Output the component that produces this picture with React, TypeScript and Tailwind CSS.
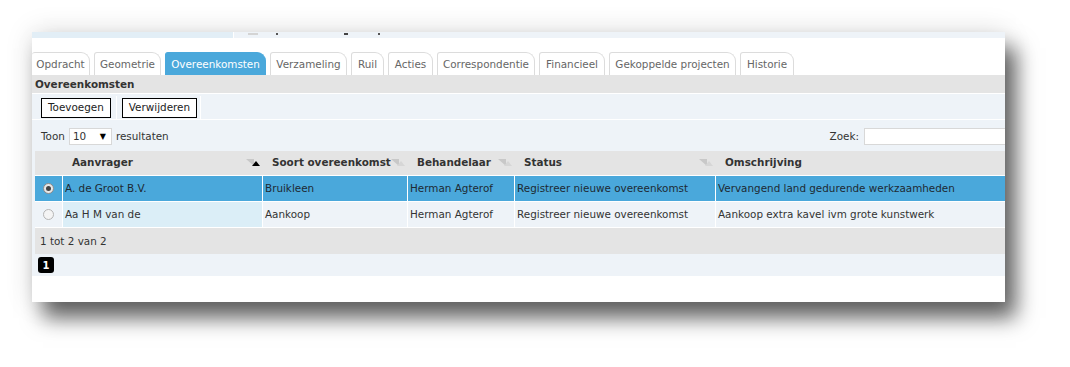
import React from 'react'

const tabs = [
  { label: 'Opdracht', w: 'w-[58px]' },
  { label: 'Geometrie', w: 'w-[67px]' },
  { label: 'Overeenkomsten', w: 'w-[101px]', active: true },
  { label: 'Verzameling', w: 'w-[77px]' },
  { label: 'Ruil', w: 'w-[33px]' },
  { label: 'Acties', w: 'w-[45px]' },
  { label: 'Correspondentie', w: 'w-[98px]' },
  { label: 'Financieel', w: 'w-[66px]' },
  { label: 'Gekoppelde projecten', w: 'w-[127px]' },
  { label: 'Historie', w: 'w-[54px]' },
]

interface Row {
  aanvrager: string
  soort: string
  behandelaar: string
  status: string
  omschrijving: string
  selected?: boolean
}

const rows: Row[] = [
  {
    aanvrager: 'A. de Groot B.V.',
    soort: 'Bruikleen',
    behandelaar: 'Herman Agterof',
    status: 'Registreer nieuwe overeenkomst',
    omschrijving: 'Vervangend land gedurende werkzaamheden',
    selected: true,
  },
  {
    aanvrager: 'Aa H M van de',
    soort: 'Aankoop',
    behandelaar: 'Herman Agterof',
    status: 'Registreer nieuwe overeenkomst',
    omschrijving: 'Aankoop extra kavel ivm grote kunstwerk',
  },
]

function SortIcon({ asc }: { asc?: boolean }) {
  return (
    <svg width="14" height="9" viewBox="0 0 14 9" className="shrink-0">
      <polygon points="0,1 8,1 8,8" fill="#c8c8c8" />
      <polygon points="6,8 10,3 14,8" fill={asc ? '#000' : '#d6d6d6'} />
    </svg>
  )
}

function Radio({ checked }: { checked?: boolean }) {
  return (
    <span
      className={`flex h-[11px] w-[11px] items-center justify-center rounded-full border ${
        checked ? 'border-[#8a8a8a] bg-[#e8e8e8]' : 'border-[#b5b5b5] bg-[#f4f4f4]'
      }`}
    >
      {checked && <span className="h-[5px] w-[5px] rounded-full bg-[#444]" />}
    </span>
  )
}

const cols = [
  { key: 'aanvrager', label: 'Aanvrager', w: 'w-[200px]', asc: true },
  { key: 'soort', label: 'Soort overeenkomst', w: 'w-[145px]' },
  { key: 'behandelaar', label: 'Behandelaar', w: 'w-[107px]' },
  { key: 'status', label: 'Status', w: 'w-[201px]' },
  { key: 'omschrijving', label: 'Omschrijving', w: 'flex-1', nosort: true },
] as const

export default function App() {
  return (
    <div
      className="h-[367px] w-[1070px] overflow-hidden bg-white pl-[32px] pt-[32px] text-[10.4px] text-[#333]"
      style={{ fontFamily: '"DejaVu Sans", Verdana, sans-serif' }}
    >
      <div className="flex h-[270px] w-[973px] flex-col bg-white shadow-[0_0_26px_rgba(0,0,0,0.13),11px_16px_20px_rgba(0,0,0,0.6)]">
        {/* cut-off strip from the previous section */}
        <div className="flex h-[6px] bg-[#eef3f8]">
          <div className="w-[201px] bg-[#e2eef6]" />
          <div className="w-px bg-white" />
          <div className="flex flex-1 items-start">
            <span className="ml-[14px] mt-[1px] h-[2px] w-[10px] bg-[#d4d4d4]" />
            <span className="ml-[18px] mt-[1px] h-[2px] w-[2px] bg-[#555]" />
            <span className="ml-[66px] mt-[1px] h-[2px] w-[4px] bg-[#444]" />
            <span className="ml-[30px] mt-[1px] h-[2px] w-[2px] bg-[#555]" />
          </div>
        </div>
        <div className="h-[14px]" />
        {/* tabs */}
        <div className="flex h-[23px] items-end gap-[4px]">
          {tabs.map((t) => (
            <div
              key={t.label}
              className={`flex h-[23px] ${t.w} shrink-0 items-center justify-center whitespace-nowrap rounded-tr-[9px] rounded-tl-[3px] border border-b-0 pt-[1px] ${
                t.active
                  ? 'border-[#4aa8db] bg-[#4aa8db] text-white'
                  : 'border-[#dcdcdc] bg-white text-[#666]'
              } ${t.label === 'Opdracht' ? 'border-l-0' : ''}`}
            >
              {t.label}
            </div>
          ))}
        </div>
        {/* section title */}
        <div className="flex h-[18px] items-center bg-[#e4e4e4] pl-[3px] pt-[1px] font-bold text-[#333]">
          Overeenkomsten
        </div>
        {/* toolbar */}
        <div className="flex h-[27px] items-center border-t border-b border-white bg-[#eef3f8] pt-[2px]">
          <div className="flex h-full items-center border-r border-white pl-[9px] pr-[5px]">
            <button className="h-[20px] border border-black bg-white px-[6px] text-[10.4px] text-[#222]">
              Toevoegen
            </button>
          </div>
          <div className="flex h-full items-center border-r border-white pl-[5px] pr-[3px]">
            <button className="h-[20px] border border-black bg-white px-[6px] text-[10.4px] text-[#222]">
              Verwijderen
            </button>
          </div>
        </div>
        {/* table block */}
        <div className="flex flex-col bg-[#eef3f8]">
          <div className="flex h-[31px] items-center justify-between pl-[9px] pt-[2px]">
            <div className="flex items-center gap-[4px]">
              <span>Toon</span>
              <div className="flex h-[17px] w-[43px] items-center justify-between border border-[#d8d8d8] bg-white pl-[3px] pr-[5px]">
                <span>10</span>
                <span className="text-[8px] text-black">▼</span>
              </div>
              <span>resultaten</span>
            </div>
            <div className="flex items-center gap-[5px]">
              <span>Zoek:</span>
              <div className="h-[17px] w-[141px] border border-r-0 border-[#d8d8d8] bg-white" />
            </div>
          </div>
          <div className="ml-[3px] flex flex-col">
            {/* header */}
            <div className="flex h-[24px] items-center bg-[#e4e4e4] font-bold">
              <div className="w-[28px]" />
              {cols.map((c) => (
                <div
                  key={c.key}
                  className={`flex ${c.w} items-center justify-between whitespace-nowrap pl-[9px] pr-[3px]`}
                >
                  <span>{c.label}</span>
                  {!('nosort' in c) && <SortIcon asc={'asc' in c} />}
                </div>
              ))}
            </div>
            {rows.map((r) => (
              <div
                key={r.aanvrager}
                className={`flex h-[26px] border-t border-white ${
                  r.selected ? 'bg-[#4aa8db] text-[#1e2a33]' : 'bg-[#eef3f8] text-[#333]'
                }`}
              >
                <div className="flex w-[28px] items-center justify-center border-r border-white">
                  <Radio checked={r.selected} />
                </div>
                {cols.map((c, i) => (
                  <div
                    key={c.key}
                    className={`flex ${c.w} items-center whitespace-nowrap pl-[2px] ${
                      i < cols.length - 1 ? 'border-r border-white' : ''
                    } ${!r.selected && i === 0 ? 'bg-[#dbeef7]' : ''}`}
                  >
                    {r[c.key]}
                  </div>
                ))}
              </div>
            ))}
            <div className="flex h-[27px] items-center border-t border-white bg-[#e4e4e4] pl-[5px] pt-[2px]">
              1 tot 2 van 2
            </div>
          </div>
          <div className="flex h-[22px] items-center pl-[6px]">
            <span className="flex h-[16px] w-[16px] items-center justify-center rounded-[3px] bg-black text-[10px] font-bold text-white">
              1
            </span>
          </div>
        </div>
        <div className="flex-1 bg-white" />
      </div>
    </div>
  )
}
